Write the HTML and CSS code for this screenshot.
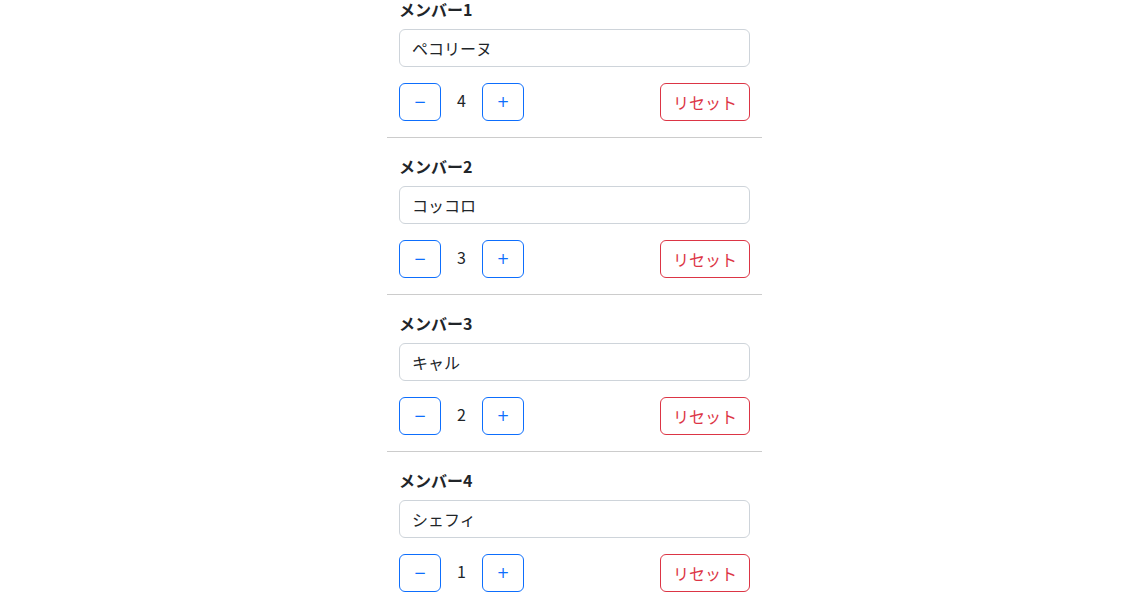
FILE: index.html
```html
<!DOCTYPE html>
<html lang="ja">
<head>
<meta charset="utf-8">
<link rel="stylesheet" href="styles.css">
</head>
<body>
<div class="list">
  <div class="member">
    <div class="title">メンバー1</div>
    <input class="name" type="text" value="ペコリーヌ">
    <div class="controls">
      <button class="btn btn-blue">−</button>
      <span class="count">4</span>
      <button class="btn btn-blue">+</button>
      <button class="btn btn-red reset">リセット</button>
    </div>
  </div>
  <div class="member">
    <div class="title">メンバー2</div>
    <input class="name" type="text" value="コッコロ">
    <div class="controls">
      <button class="btn btn-blue">−</button>
      <span class="count">3</span>
      <button class="btn btn-blue">+</button>
      <button class="btn btn-red reset">リセット</button>
    </div>
  </div>
  <div class="member">
    <div class="title">メンバー3</div>
    <input class="name" type="text" value="キャル">
    <div class="controls">
      <button class="btn btn-blue">−</button>
      <span class="count">2</span>
      <button class="btn btn-blue">+</button>
      <button class="btn btn-red reset">リセット</button>
    </div>
  </div>
  <div class="member">
    <div class="title">メンバー4</div>
    <input class="name" type="text" value="シェフィ">
    <div class="controls">
      <button class="btn btn-blue">−</button>
      <span class="count">1</span>
      <button class="btn btn-blue">+</button>
      <button class="btn btn-red reset">リセット</button>
    </div>
  </div>
</div>
</body>
</html>
```
FILE: styles.css
```css
* { box-sizing: border-box; }
html, body { margin: 0; padding: 0; background: #fff; }
body {
  padding: 0 0 0 16px;
  font-family: "Noto Sans CJK JP", "Noto Sans", sans-serif;
  font-size: 16px;
  line-height: 1.5;
  color: #212529;
}
.list {
  width: 375px;
  margin: -19px auto 0;
}
.member {
  padding: 16px 12px;
  border-bottom: 1px solid #ccc;
}
.title {
  font-weight: 700;
  font-size: 16px;
  line-height: 24px;
  margin-bottom: 8px;
}
.name {
  display: block;
  width: 100%;
  height: 38px;
  padding: 6px 12px;
  font: inherit;
  color: #212529;
  border: 1px solid #ced4da;
  border-radius: 6px;
  margin-bottom: 16px;
  background: #fff;
}
.controls {
  display: flex;
  align-items: center;
}
.btn {
  height: 38px;
  padding: 6px 12px;
  font: inherit;
  line-height: 24px;
  background: #fff;
  border-radius: 6px;
  border: 1px solid;
  cursor: pointer;
}
.btn-blue {
  width: 42px;
  padding: 0;
  font-family: "DejaVu Sans", sans-serif;
  font-size: 15px;
  color: #0d6efd;
  border-color: #0d6efd;
}
.btn-red {
  color: #dc3545;
  border-color: #dc3545;
}
.reset { margin-left: auto; }
.count {
  width: 41px;
  text-align: center;
  line-height: 24px;
  margin-top: -4px;
}
```
